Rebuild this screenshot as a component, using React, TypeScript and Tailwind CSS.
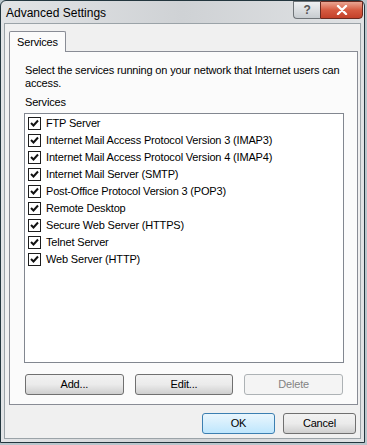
import React from 'react'

const services = [
  'FTP Server',
  'Internet Mail Access Protocol Version 3 (IMAP3)',
  'Internet Mail Access Protocol Version 4 (IMAP4)',
  'Internet Mail Server (SMTP)',
  'Post-Office Protocol Version 3 (POP3)',
  'Remote Desktop',
  'Secure Web Server (HTTPS)',
  'Telnet Server',
  'Web Server (HTTP)',
]

function Check() {
  return (
    <span className="w-[13px] h-[13px] shrink-0 border border-[#1c1c1c] bg-white flex items-center justify-center">
      <svg width="9" height="9" viewBox="0 0 9 9">
        <path d="M1 4 L3.5 6.5 L8 1.5" fill="none" stroke="#111" strokeWidth="2" />
      </svg>
    </span>
  )
}

function Btn({ label, w, kind }: { label: string; w: string; kind?: 'default' | 'disabled' }) {
  const base = 'h-[21px] rounded-[3px] border flex items-center justify-center text-[11px] '
  const look =
    kind === 'default'
      ? 'border-[#3c7fb1] bg-gradient-to-b from-[#eaf6fd] to-[#bee6fd] text-black'
      : kind === 'disabled'
        ? 'border-[#adb2b5] bg-[#f4f4f4] text-[#838383]'
        : 'border-[#707070] bg-gradient-to-b from-[#f2f2f2] via-[#ebebeb] to-[#cfcfcf] text-black'
  return <div className={base + look + ' ' + w}>{label}</div>
}

export default function App() {
  return (
    <div
      className="w-[367px] h-[445px] bg-[#b9c6cc] tracking-[-0.17px]"
      style={{ fontFamily: '"Liberation Sans", Arial, sans-serif' }}
    >
      <div className="w-[365px] h-[443px] border border-[#23363e] rounded-t-[6px] bg-gradient-to-r from-[#e2e4e6] via-[#cfd2d5] to-[#e0e2e4] flex flex-col">
        {/* title bar */}
        <div className="h-[22px] flex items-start justify-between pl-[5px] shrink-0">
          <span className="text-[12px] text-black mt-[3px] tracking-normal">Advanced Settings</span>
          <div className="flex mr-[1px]">
            <div className="w-[27px] h-[18px] border border-[#6f7478] border-r-0 rounded-bl-[4px] bg-gradient-to-b from-[#eef0f2] to-[#c7ccd0] flex items-center justify-center text-[12px] text-[#555] font-bold">
              ?
            </div>
            <div className="w-[43px] h-[18px] border border-[#6b2a20] rounded-br-[4px] bg-gradient-to-b from-[#e9a593] via-[#d65b41] to-[#c3412a] flex items-center justify-center">
              <svg width="12" height="10" viewBox="0 0 12 10">
                <path d="M2 1 L10 9 M10 1 L2 9" stroke="#fff" strokeWidth="2.4" strokeLinecap="round" />
              </svg>
            </div>
          </div>
        </div>

        {/* client area */}
        <div className="mx-[3px] mb-[3px] flex-1 bg-[#f0f0f0] border border-[#9ba3a8] pt-[7px] pl-[4px] pr-[2px] flex flex-col">
          <div className="w-[57px] h-[21px] border border-[#898c95] border-b-0 rounded-t-[2px] bg-[#fbfbfb] -mb-[1px] relative z-10 flex items-center justify-center text-[11px] text-black">
            Services
          </div>
          <div className="w-[349px] h-[354px] border border-[#898c95] bg-[#fbfbfb] px-[14px] pt-[12px] flex flex-col">
            <p className="text-[11px] leading-[13px] text-black pl-[1px] -mr-[8px]">
              Select the services running on your network that Internet users can access.
            </p>
            <p className="text-[11px] leading-[13px] text-black mt-[6px] pl-[1px]">Services</p>
            <div className="mt-[4px] w-[320px] h-[250px] border border-[#828790] bg-white pt-[1px]">
              {services.map(s => (
                <div key={s} className="h-[17px] flex items-center pl-[3px] gap-[5px] text-[11px] text-black">
                  <Check />
                  <span>{s}</span>
                </div>
              ))}
            </div>
            <div className="mt-[11px] flex gap-[11px] pl-[1px]">
              <Btn label="Add..." w="w-[99px]" />
              <Btn label="Edit..." w="w-[99px]" />
              <Btn label="Delete" w="w-[99px]" kind="disabled" />
            </div>
          </div>
          <div className="mt-[8px] flex justify-end gap-[8px] pr-[2px]">
            <Btn label="OK" w="w-[73px]" kind="default" />
            <Btn label="Cancel" w="w-[73px]" />
          </div>
        </div>
      </div>
    </div>
  )
}
